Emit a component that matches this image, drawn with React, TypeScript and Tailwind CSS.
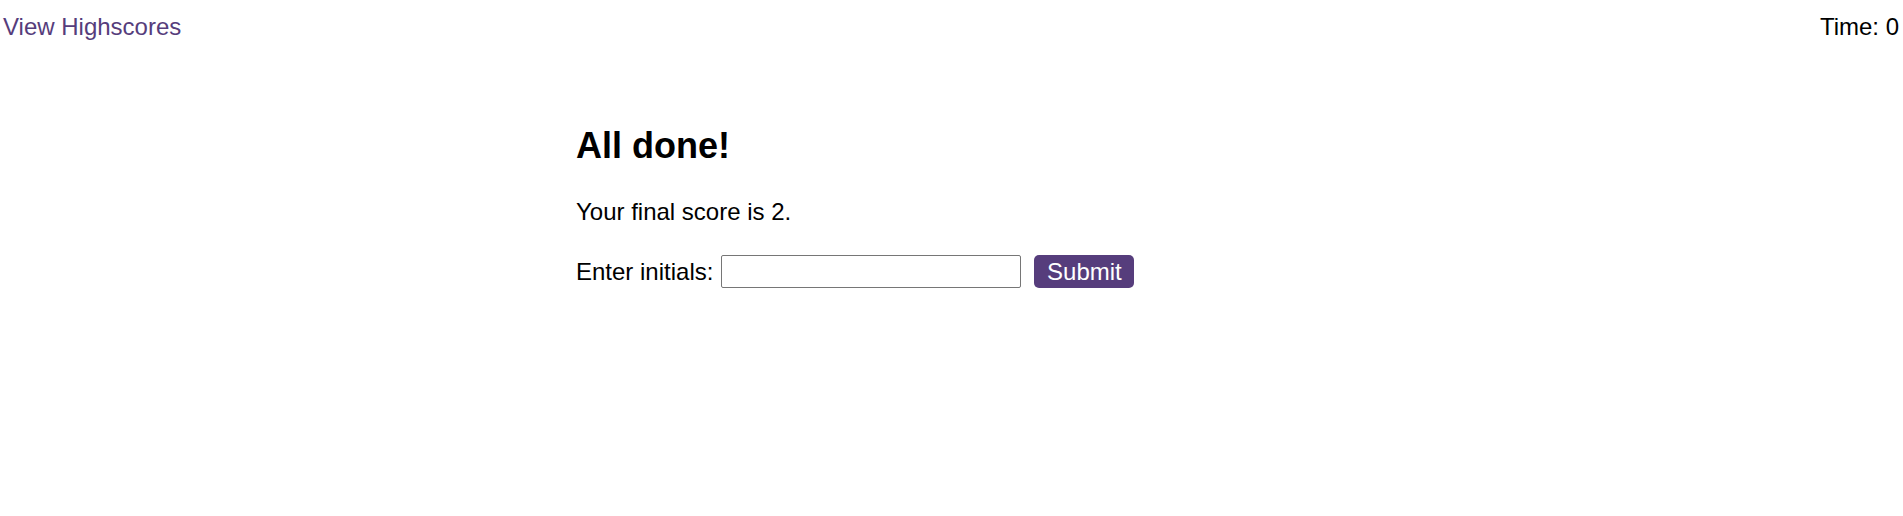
import { useState } from "react";

export default function App() {
  const [initials, setInitials] = useState("");

  return (
    <div className="min-h-[516px] bg-white text-black font-['Liberation_Sans',Arial,sans-serif] text-[24px] leading-[28px]">
      <header className="flex justify-between pl-[3px] pr-[4px] pt-[13px]">
        <a href="#" className="text-[#563d7c]">View Highscores</a>
        <div>Time: 0</div>
      </header>

      <main className="mx-auto w-[751px]">
        <h2 className="mt-[84px] text-[36px] leading-[41px] font-bold">All done!</h2>
        <p className="mt-[32px]">Your final score is 2.</p>
        <form className="mt-[29px] flex h-[33px] items-center" onSubmit={(e) => e.preventDefault()}>
          <label htmlFor="initials" className="mr-[8px]">Enter initials:</label>
          <input
            id="initials"
            value={initials}
            onChange={(e) => setInitials(e.target.value)}
            className="h-[33px] w-[300px] rounded-[2px] border border-[#767676] px-1 text-[24px]"
          />
          <button
            type="submit"
            className="ml-[13px] h-[33px] w-[100px] rounded-[5px] bg-[#563d7c] text-white"
          >
            Submit
          </button>
        </form>
      </main>
    </div>
  );
}
